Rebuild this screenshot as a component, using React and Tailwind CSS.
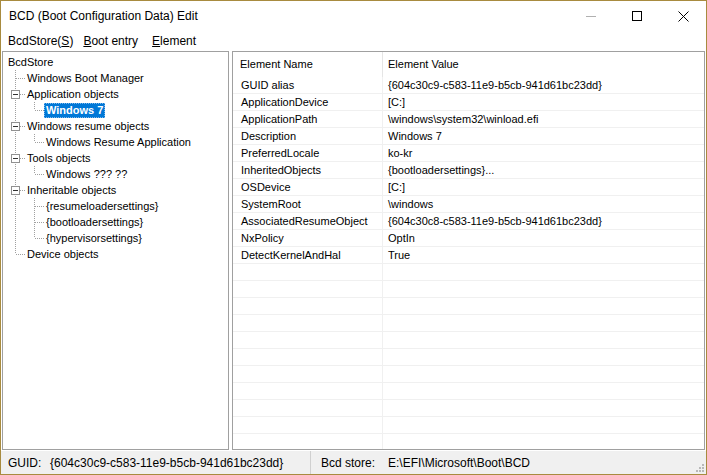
import React from "react";

const tree = [
  { label: "Windows Boot Manager", children: [] },
  { label: "Application objects", children: [{ label: "Windows 7", selected: true }] },
  { label: "Windows resume objects", children: [{ label: "Windows Resume Application" }] },
  { label: "Tools objects", children: [{ label: "Windows ??? ??" }] },
  {
    label: "Inheritable objects",
    children: [
      { label: "{resumeloadersettings}" },
      { label: "{bootloadersettings}" },
      { label: "{hypervisorsettings}" },
    ],
  },
  { label: "Device objects", children: [] },
];

const rows = [
  ["GUID alias", "{604c30c9-c583-11e9-b5cb-941d61bc23dd}"],
  ["ApplicationDevice", "[C:]"],
  ["ApplicationPath", "\\windows\\system32\\winload.efi"],
  ["Description", "Windows 7"],
  ["PreferredLocale", "ko-kr"],
  ["InheritedObjects", "{bootloadersettings}..."],
  ["OSDevice", "[C:]"],
  ["SystemRoot", "\\windows"],
  ["AssociatedResumeObject", "{604c30c8-c583-11e9-b5cb-941d61bc23dd}"],
  ["NxPolicy", "OptIn"],
  ["DetectKernelAndHal", "True"],
];

const LINE = "#a0a0a0";

function Gutter({ vertical, last, connector, box }) {
  return (
    <svg width="19" height="16" className="shrink-0 block">
      {vertical && (
        <line x1="9.5" y1="0" x2="9.5" y2={last ? 8 : 16} stroke={LINE} strokeDasharray="1 1" />
      )}
      {connector && (
        <line x1={box ? 14 : 10} y1="8.5" x2="19" y2="8.5" stroke={LINE} strokeDasharray="1 1" />
      )}
      {box && (
        <g>
          <rect x="5.5" y="4.5" width="8" height="8" fill="#fff" stroke="#919191" />
          <line x1="7" y1="8.5" x2="12" y2="8.5" stroke="#333" />
        </g>
      )}
    </svg>
  );
}

function TreeRow({ gutters, label, selected }) {
  return (
    <div className="flex h-[16px] items-center">
      {gutters}
      <span
        className={
          selected
            ? "px-[2px] h-[15px] leading-[15px] bg-[#0078d7] text-white font-bold whitespace-nowrap outline outline-1 outline-dotted outline-[#7fb8ea] -outline-offset-1"
            : "px-[2px] leading-[15px] whitespace-nowrap"
        }
      >
        {label}
      </span>
    </div>
  );
}

function Tree() {
  const out = [];
  out.push(<TreeRow key="root" gutters={null} label="BcdStore" />);
  tree.forEach((node, i) => {
    const lastTop = i === tree.length - 1;
    const hasKids = node.children.length > 0;
    out.push(
      <TreeRow
        key={"n" + i}
        label={node.label}
        gutters={<Gutter vertical last={lastTop} connector box={hasKids} />}
      />
    );
    node.children.forEach((c, j) => {
      const lastKid = j === node.children.length - 1;
      out.push(
        <TreeRow
          key={"c" + i + "-" + j}
          label={c.label}
          selected={c.selected}
          gutters={
            <>
              <Gutter vertical={!lastTop} />
              <Gutter vertical last={lastKid} connector />
            </>
          }
        />
      );
    });
  });
  return <div className="pt-[2px] pl-[3px] text-[11px]">{out}</div>;
}

function ListView() {
  const all = [];
  for (let i = 0; i < 22; i++) all.push(rows[i] || ["", ""]);
  return (
    <div className="text-[11px] h-full overflow-hidden">
      <div className="flex h-[25px] items-center">
        <div className="w-[150px] h-full flex items-center pl-[7px] border-r border-[#e5e5e5]">
          Element Name
        </div>
        <div className="flex-1 pl-[5px]">Element Value</div>
      </div>
      {all.map((r, i) => (
        <div key={i} className="flex h-[17px] border-b border-[#f0f0f0] items-center">
          <div className="w-[150px] h-full flex items-center pl-[8px] border-r border-[#f0f0f0] whitespace-nowrap">
            {r[0]}
          </div>
          <div className="flex-1 pl-[5px] whitespace-nowrap">{r[1]}</div>
        </div>
      ))}
    </div>
  );
}

export default function App() {
  return (
    <div className="w-[707px] h-[475px] border border-[#a88b3f] bg-white flex flex-col text-black font-['Liberation_Sans',Arial,sans-serif] overflow-hidden">
      {/* Title bar */}
      <div className="h-[30px] flex items-center shrink-0">
        <div className="pl-[8px] text-[12px] flex-1 whitespace-nowrap">BCD (Boot Configuration Data) Edit</div>
        <div className="flex h-full">
          <div className="w-[46px] h-full flex items-center justify-center">
            <svg width="10" height="10"><line x1="0" y1="5.5" x2="10" y2="5.5" stroke="#b0b0b0" /></svg>
          </div>
          <div className="w-[46px] h-full flex items-center justify-center">
            <svg width="10" height="10"><rect x="0.5" y="0.5" width="9" height="9" fill="none" stroke="#000" /></svg>
          </div>
          <div className="w-[46px] h-full flex items-center justify-center">
            <svg width="11" height="11">
              <line x1="0.5" y1="0.5" x2="10.5" y2="10.5" stroke="#000" />
              <line x1="10.5" y1="0.5" x2="0.5" y2="10.5" stroke="#000" />
            </svg>
          </div>
        </div>
      </div>
      {/* Menu bar */}
      <div className="h-[20px] flex items-center text-[12px] shrink-0 pl-[7px]">
        <span className="mr-[10px]">BcdStore(<span className="underline">S</span>)</span>
        <span className="mr-[14px]"><span className="underline">B</span>oot entry</span>
        <span><span className="underline">E</span>lement</span>
      </div>
      {/* Main */}
      <div className="flex-1 flex pl-[1px] pr-[1px] gap-[3px] min-h-0">
        <div className="w-[227px] border border-[#a0a0a0] bg-white overflow-hidden">
          <Tree />
        </div>
        <div className="flex-1 border border-[#a0a0a0] bg-white overflow-hidden">
          <ListView />
        </div>
      </div>
      {/* Status bar */}
      <div className="h-[23px] mt-[1px] bg-[#f0f0f0] flex items-center text-[12px] shrink-0">
        <div className="w-[310px] h-full flex items-center pl-[7px] border-r border-[#d0d0d0]">
          <span className="w-[42px]">GUID:</span>
          <span className="whitespace-nowrap">{"{604c30c9-c583-11e9-b5cb-941d61bc23dd}"}</span>
        </div>
        <div className="flex-1 h-full flex items-center pl-[10px]">
          <span className="w-[67px]">Bcd store:</span>
          <span className="whitespace-nowrap">E:\EFI\Microsoft\Boot\BCD</span>
        </div>
        <div className="self-end mb-[2px] mr-[2px]">
          <svg width="10" height="10">
            <rect x="8" y="8" width="2" height="2" fill="#b8b8b8" />
            <rect x="5" y="8" width="2" height="2" fill="#b8b8b8" />
            <rect x="2" y="8" width="2" height="2" fill="#b8b8b8" />
            <rect x="8" y="5" width="2" height="2" fill="#b8b8b8" />
            <rect x="5" y="5" width="2" height="2" fill="#b8b8b8" />
            <rect x="8" y="2" width="2" height="2" fill="#b8b8b8" />
          </svg>
        </div>
      </div>
    </div>
  );
}
